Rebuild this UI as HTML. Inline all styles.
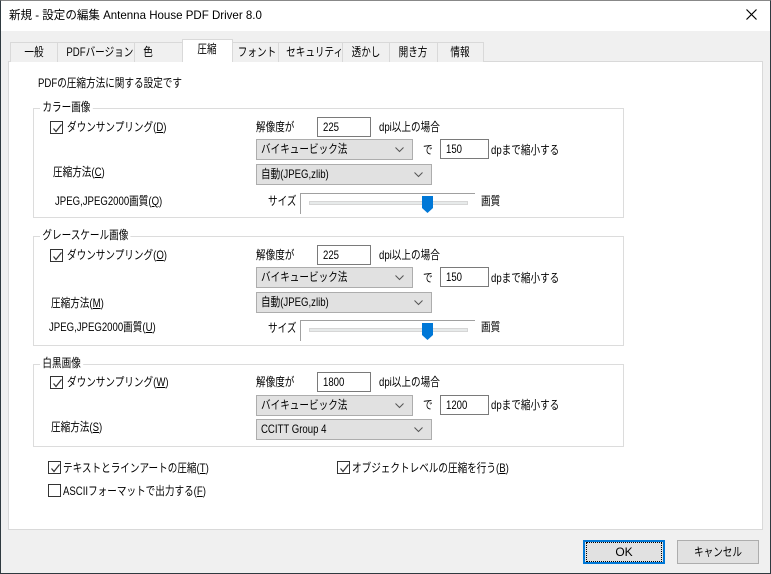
<!DOCTYPE html>
<html><head><meta charset="utf-8"><style>
*{box-sizing:border-box;margin:0;padding:0}
body{width:771px;height:574px;overflow:hidden;background:#f0f0f0;font-family:"Liberation Sans","Noto Sans CJK JP",sans-serif;font-size:12px;color:#000;position:relative}
.a{position:absolute;white-space:nowrap;line-height:14px;transform:scaleX(.8);transform-origin:left center}
.s{display:inline-block;white-space:nowrap;transform:scaleX(.8);transform-origin:center}
.sl2{display:inline-block;white-space:nowrap;transform:scaleX(.8);transform-origin:left}
.win{position:absolute;left:0;top:0;width:771px;height:574px;border:1px solid #2f3a40;border-top:1px solid #888}
.title{position:absolute;left:1px;top:1px;width:769px;height:30px;background:#fff}
.tab{position:absolute;top:42px;height:20px;background:#f0f0f0;border:1px solid #d9d9d9;border-bottom:none;text-align:center;line-height:18px;white-space:nowrap;overflow:hidden}
.panel{position:absolute;left:8px;top:61px;width:755px;height:469px;background:#fff;border:1px solid #d9d9d9}
.grp{position:absolute;left:33px;width:591px;border:1px solid #dcdcdc}
.gl{position:absolute;background:#fff;padding:0 3px;line-height:14px;white-space:nowrap;transform:scaleX(.8);transform-origin:left center}
.cb{position:absolute;width:13px;height:13px;border:1px solid #333;background:#fff}
.cb svg{position:absolute;left:1px;top:1px}
.inp{position:absolute;height:20px;border:1px solid #7a7a7a;background:#fff;padding-left:5px;line-height:18px}
.cmb{position:absolute;height:21px;border:1px solid #adadad;background:#e1e1e1;padding-left:4px;line-height:19px;white-space:nowrap}
.cmb svg{position:absolute;right:8px;top:7px}
.sl{position:absolute;width:175px;height:21px;border-left:1px solid #a0a0a0;border-top:1px solid #a0a0a0}
.trk{position:absolute;left:8px;top:7px;width:159px;height:4px;background:#e7eaea;border:1px solid #d6d6d6}
.btn{position:absolute;top:540px;width:82px;height:24px;background:#e1e1e1;border:1px solid #adadad;text-align:center;line-height:22px}
</style></head><body>
<div class="win"></div>
<div class="title"></div>
<div class="a" style="left:9px;top:8px;transform:scaleX(.96)">新規 - 設定の編集 Antenna House PDF Driver 8.0</div>
<svg style="position:absolute;left:746px;top:9px" width="11" height="11"><path d="M0.5 0.5L10.5 10.5M10.5 0.5L0.5 10.5" stroke="#000" stroke-width="1.2"/></svg>

<div class="panel"></div>
<div class="tab" style="left:10px;width:48px"><span class="s">一般</span></div>
<div class="tab" style="left:57px;width:78px"><span class="s">PDFバージョン</span></div>
<div class="tab" style="left:134px;width:49px;text-align:left;padding-left:7px"><span class="s">色</span></div>
<div class="tab" style="left:182px;width:51px;top:39px;height:23px;background:#fff;line-height:18px"><span class="s">圧縮</span></div>
<div class="tab" style="left:232px;width:47px"><span class="s">フォント</span></div>
<div class="tab" style="left:278px;width:65px"><span class="s">セキュリティ</span></div>
<div class="tab" style="left:342px;width:48px"><span class="s">透かし</span></div>
<div class="tab" style="left:389px;width:49px"><span class="s">開き方</span></div>
<div class="tab" style="left:437px;width:47px"><span class="s">情報</span></div>

<div class="a" style="left:38px;top:76px">PDFの圧縮方法に関する設定です</div>

<!-- group 1 -->
<div class="grp" style="top:108px;height:110px"></div>
<div class="gl" style="left:40px;top:100px">カラー画像</div>
<div class="cb" style="left:50px;top:121px"><svg width="11" height="11"><path d="M1.5 5.5L4 8.5L9.5 1.5" stroke="#333" fill="none" stroke-width="1.2"/></svg></div>
<div class="a" style="left:67px;top:120px">ダウンサンプリング(<u>D</u>)</div>
<div class="a" style="left:256px;top:120px">解像度が</div>
<div class="inp" style="left:317px;top:117px;width:54px"><span class="sl2">225</span></div>
<div class="a" style="left:379px;top:120px">dpi以上の場合</div>
<div class="cmb" style="left:256px;top:139px;width:157px"><span class="sl2">バイキュービック法</span><svg width="9" height="6"><path d="M0.5 0.5L4.5 4.5L8.5 0.5" stroke="#555" fill="none"/></svg></div>
<div class="a" style="left:423px;top:143px">で</div>
<div class="inp" style="left:440px;top:139px;width:49px"><span class="sl2">150</span></div>
<div class="a" style="left:491px;top:143px">dpまで縮小する</div>
<div class="a" style="left:53px;top:165px">圧縮方法(<u>C</u>)</div>
<div class="cmb" style="left:256px;top:164px;width:176px"><span class="sl2">自動(JPEG,zlib)</span><svg width="9" height="6"><path d="M0.5 0.5L4.5 4.5L8.5 0.5" stroke="#555" fill="none"/></svg></div>
<div class="a" style="left:55px;top:194px">JPEG,JPEG2000画質(<u>Q</u>)</div>
<div class="a" style="left:268px;top:194px">サイズ</div>
<div class="sl" style="left:300px;top:193px"><div class="trk"></div><svg style="position:absolute;left:121px;top:2px" width="11" height="17"><path d="M0 0H11V12L5.5 17L0 12Z" fill="#0078d7"/></svg></div>
<div class="a" style="left:481px;top:194px">画質</div>

<!-- group 2 -->
<div class="grp" style="top:236px;height:110px"></div>
<div class="gl" style="left:40px;top:228px">グレースケール画像</div>
<div class="cb" style="left:50px;top:249px"><svg width="11" height="11"><path d="M1.5 5.5L4 8.5L9.5 1.5" stroke="#333" fill="none" stroke-width="1.2"/></svg></div>
<div class="a" style="left:67px;top:248px">ダウンサンプリング(<u>O</u>)</div>
<div class="a" style="left:256px;top:248px">解像度が</div>
<div class="inp" style="left:317px;top:245px;width:54px"><span class="sl2">225</span></div>
<div class="a" style="left:379px;top:248px">dpi以上の場合</div>
<div class="cmb" style="left:256px;top:267px;width:157px"><span class="sl2">バイキュービック法</span><svg width="9" height="6"><path d="M0.5 0.5L4.5 4.5L8.5 0.5" stroke="#555" fill="none"/></svg></div>
<div class="a" style="left:423px;top:271px">で</div>
<div class="inp" style="left:440px;top:267px;width:49px"><span class="sl2">150</span></div>
<div class="a" style="left:491px;top:271px">dpまで縮小する</div>
<div class="a" style="left:51px;top:296px">圧縮方法(<u>M</u>)</div>
<div class="cmb" style="left:256px;top:292px;width:176px"><span class="sl2">自動(JPEG,zlib)</span><svg width="9" height="6"><path d="M0.5 0.5L4.5 4.5L8.5 0.5" stroke="#555" fill="none"/></svg></div>
<div class="a" style="left:49px;top:320px">JPEG,JPEG2000画質(<u>U</u>)</div>
<div class="a" style="left:268px;top:321px">サイズ</div>
<div class="sl" style="left:300px;top:320px"><div class="trk"></div><svg style="position:absolute;left:121px;top:2px" width="11" height="17"><path d="M0 0H11V12L5.5 17L0 12Z" fill="#0078d7"/></svg></div>
<div class="a" style="left:481px;top:320px">画質</div>

<!-- group 3 -->
<div class="grp" style="top:364px;height:83px"></div>
<div class="gl" style="left:40px;top:356px">白黒画像</div>
<div class="cb" style="left:50px;top:376px"><svg width="11" height="11"><path d="M1.5 5.5L4 8.5L9.5 1.5" stroke="#333" fill="none" stroke-width="1.2"/></svg></div>
<div class="a" style="left:67px;top:375px">ダウンサンプリング(<u>W</u>)</div>
<div class="a" style="left:256px;top:375px">解像度が</div>
<div class="inp" style="left:317px;top:372px;width:54px"><span class="sl2">1800</span></div>
<div class="a" style="left:379px;top:375px">dpi以上の場合</div>
<div class="cmb" style="left:256px;top:395px;width:157px"><span class="sl2">バイキュービック法</span><svg width="9" height="6"><path d="M0.5 0.5L4.5 4.5L8.5 0.5" stroke="#555" fill="none"/></svg></div>
<div class="a" style="left:423px;top:398px">で</div>
<div class="inp" style="left:440px;top:395px;width:49px"><span class="sl2">1200</span></div>
<div class="a" style="left:491px;top:398px">dpまで縮小する</div>
<div class="a" style="left:51px;top:420px">圧縮方法(<u>S</u>)</div>
<div class="cmb" style="left:256px;top:419px;width:176px"><span class="sl2">CCITT Group 4</span><svg width="9" height="6"><path d="M0.5 0.5L4.5 4.5L8.5 0.5" stroke="#555" fill="none"/></svg></div>

<div class="cb" style="left:48px;top:461px"><svg width="11" height="11"><path d="M1.5 5.5L4 8.5L9.5 1.5" stroke="#333" fill="none" stroke-width="1.2"/></svg></div>
<div class="a" style="left:63px;top:461px">テキストとラインアートの圧縮(<u>T</u>)</div>
<div class="cb" style="left:337px;top:461px"><svg width="11" height="11"><path d="M1.5 5.5L4 8.5L9.5 1.5" stroke="#333" fill="none" stroke-width="1.2"/></svg></div>
<div class="a" style="left:352px;top:461px">オブジェクトレベルの圧縮を行う(<u>B</u>)</div>
<div class="cb" style="left:48px;top:484px"></div>
<div class="a" style="left:63px;top:484px">ASCIIフォーマットで出力する(<u>F</u>)</div>

<div class="btn" style="left:583px;border:2px solid #0078d7;line-height:20px"><span style="display:inline-block;outline:1px dotted #000;outline-offset:2px;width:70px;line-height:14px">OK</span></div>
<div class="btn" style="left:677px"><span class="s">キャンセル</span></div>
</body></html>
